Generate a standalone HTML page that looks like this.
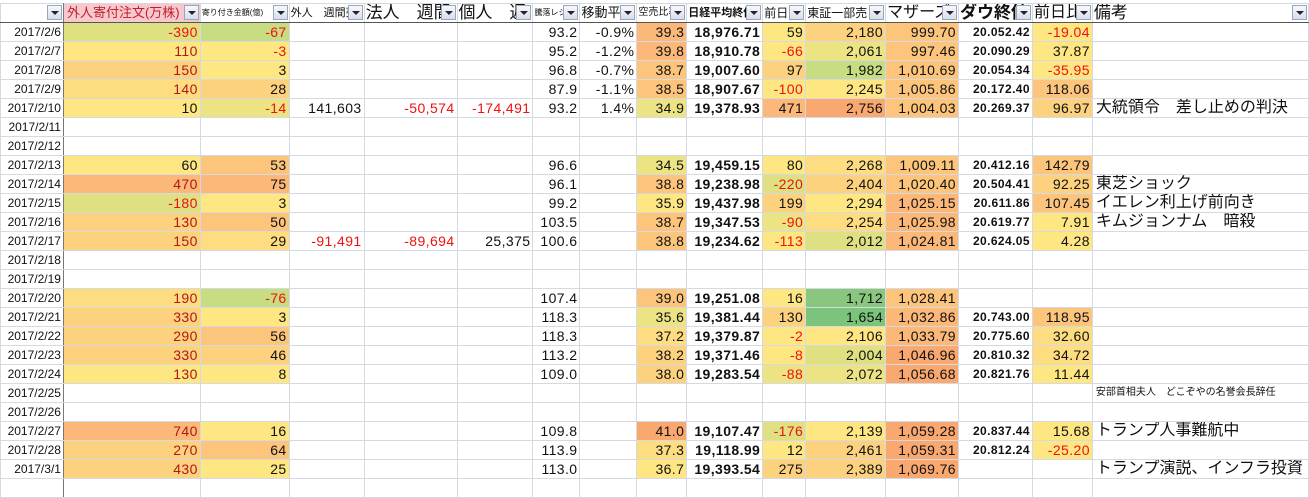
<!DOCTYPE html>
<html><head><meta charset="utf-8">
<style>
body{margin:0;background:#fff;width:1309px;height:484px;overflow:hidden;font-family:"Liberation Sans","Noto Sans CJK JP",sans-serif;}
table{position:absolute;left:0;top:3px;border-collapse:collapse;table-layout:fixed;font-size:14px;}
td{border:1px solid #d5d9e2;height:18px;padding:0 2px;text-align:right;white-space:nowrap;overflow:hidden;color:#111;line-height:18px;letter-spacing:0.4px;}
td.a{text-align:right;font-size:12px;border-right:1px solid #777;padding:0 2px 0 0;letter-spacing:0}
tr.h td{position:relative;text-align:left;font-size:15px;border-bottom:1px solid #555;padding:0 1px;letter-spacing:0}
.btn{position:absolute;right:1px;top:1px;width:15px;height:15px;border:1px solid #9aa6bc;background:linear-gradient(#f6f8fb,#d8dfeb);box-sizing:border-box;}
.btn:after{content:"";position:absolute;left:3px;top:5px;border-left:4px solid transparent;border-right:4px solid transparent;border-top:4px solid #223;}
.r{color:#f01010}.dr{color:#b01818}
.b{font-weight:bold}.n{font-weight:bold;font-size:12px}
.y{background:#fee683}.y2{background:#fedd81}.o1{background:#fdd27f}.o2{background:#fcc57b}.o3{background:#fbb879}.o4{background:#f9a870}
.g1{background:#ece483}.g2{background:#dee082}.g3{background:#c8dc81}.g4{background:#8ac77e}.g5{background:#7bc47c}
td.p{text-align:left;font-size:16px;padding-left:3px;letter-spacing:0}
</style></head><body>
<table>
<colgroup><col style="width:63px"><col style="width:137px"><col style="width:89px"><col style="width:75px"><col style="width:93px"><col style="width:76px"><col style="width:47px"><col style="width:57px"><col style="width:50px"><col style="width:76px"><col style="width:43px"><col style="width:80px"><col style="width:73px"><col style="width:74px"><col style="width:60px"><col style="width:216px"></colgroup>
<tr class="h">
<td class="a" style="border-bottom:1px solid #555"><span class="btn"></span></td>
<td style="background:#f8c8cf;color:#c0202a;font-size:13px;padding-left:3px">外人寄付注文(万株)<span class="btn"></span></td>
<td style="font-size:8px">寄り付き金額(億)<span class="btn"></span></td>
<td style="font-size:11px">外人　週間売<span class="btn"></span></td>
<td style="font-size:17px">法人　週間<span class="btn"></span></td>
<td style="font-size:17px">個人　週<span class="btn"></span></td>
<td style="font-size:8px">騰落レシオ<span class="btn"></span></td>
<td style="font-size:13px">移動平<span class="btn"></span></td>
<td style="font-size:10px">空売比率<span class="btn"></span></td>
<td style="font-size:11px;font-weight:bold">日経平均終値<span class="btn"></span></td>
<td style="font-size:12px">前日<span class="btn"></span></td>
<td style="font-size:12px">東証一部売<span class="btn"></span></td>
<td style="font-size:16px">マザーズ<span class="btn"></span></td>
<td style="font-size:17px;font-weight:bold">ダウ終値<span class="btn"></span></td>
<td style="font-size:16px">前日比<span class="btn"></span></td>
<td style="font-size:17px">備考<span class="btn"></span></td>
</tr>
<tr><td class="a">2017/2/6</td><td class="g2 r">-390</td><td class="g3 r">-67</td><td></td><td></td><td></td><td>93.2</td><td>-0.9%</td><td class="o3">39.3</td><td class="b">18,976.71</td><td class="y">59</td><td class="o1">2,180</td><td class="o2">999.70</td><td class="n">20.052.42</td><td class="y r">-19.04</td><td></td></tr>
<tr><td class="a">2017/2/7</td><td class="y dr">110</td><td class="y r">-3</td><td></td><td></td><td></td><td>95.2</td><td>-1.2%</td><td class="o3">39.8</td><td class="b">18,910.78</td><td class="y r">-66</td><td class="g1">2,061</td><td class="o2">997.46</td><td class="n">20.090.29</td><td class="y">37.87</td><td></td></tr>
<tr><td class="a">2017/2/8</td><td class="o1 dr">150</td><td class="y">3</td><td></td><td></td><td></td><td>96.8</td><td>-0.7%</td><td class="o2">38.7</td><td class="b">19,007.60</td><td class="o1">97</td><td class="g3">1,982</td><td class="o2">1,010.69</td><td class="n">20.054.34</td><td class="y r">-35.95</td><td></td></tr>
<tr><td class="a">2017/2/9</td><td class="y2 dr">140</td><td class="o1">28</td><td></td><td></td><td></td><td>87.9</td><td>-1.1%</td><td class="o2">38.5</td><td class="b">18,907.67</td><td class="y r">-100</td><td class="y">2,245</td><td class="o2">1,005.86</td><td class="n">20.172.40</td><td class="o2">118.06</td><td></td></tr>
<tr><td class="a">2017/2/10</td><td class="y">10</td><td class="g1 r">-14</td><td>141,603</td><td class="r">-50,574</td><td class="r">-174,491</td><td>93.2</td><td>1.4%</td><td class="g1">34.9</td><td class="b">19,378.93</td><td class="o3">471</td><td class="o4">2,756</td><td class="o2">1,004.03</td><td class="n">20.269.37</td><td class="o1">96.97</td><td class="p">大統領令　差し止めの判決</td></tr>
<tr><td class="a">2017/2/11</td><td></td><td></td><td></td><td></td><td></td><td></td><td></td><td></td><td></td><td></td><td></td><td></td><td></td><td></td><td></td></tr>
<tr><td class="a">2017/2/12</td><td></td><td></td><td></td><td></td><td></td><td></td><td></td><td></td><td></td><td></td><td></td><td></td><td></td><td></td><td></td></tr>
<tr><td class="a">2017/2/13</td><td class="y">60</td><td class="o2">53</td><td></td><td></td><td></td><td>96.6</td><td></td><td class="g1">34.5</td><td class="b">19,459.15</td><td class="y">80</td><td class="y2">2,268</td><td class="o2">1,009.11</td><td class="n">20.412.16</td><td class="o2">142.79</td><td></td></tr>
<tr><td class="a">2017/2/14</td><td class="o3 dr">470</td><td class="o3">75</td><td></td><td></td><td></td><td>96.1</td><td></td><td class="o2">38.8</td><td class="b">19,238.98</td><td class="g2 r">-220</td><td class="o1">2,404</td><td class="o2">1,020.40</td><td class="n">20.504.41</td><td class="o1">92.25</td><td class="p">東芝ショック</td></tr>
<tr><td class="a">2017/2/15</td><td class="g2 r">-180</td><td class="y">3</td><td></td><td></td><td></td><td>99.2</td><td></td><td class="y">35.9</td><td class="b">19,437.98</td><td class="o1">199</td><td class="y">2,294</td><td class="o3">1,025.15</td><td class="n">20.611.86</td><td class="o2">107.45</td><td class="p">イエレン利上げ前向き</td></tr>
<tr><td class="a">2017/2/16</td><td class="o1 dr">130</td><td class="o2">50</td><td></td><td></td><td></td><td>103.5</td><td></td><td class="o2">38.7</td><td class="b">19,347.53</td><td class="g1 r">-90</td><td class="y2">2,254</td><td class="o3">1,025.98</td><td class="n">20.619.77</td><td class="y">7.91</td><td class="p">キムジョンナム　暗殺</td></tr>
<tr><td class="a">2017/2/17</td><td class="o1 dr">150</td><td class="y2">29</td><td class="r">-91,491</td><td class="r">-89,694</td><td>25,375</td><td>100.6</td><td></td><td class="o2">38.8</td><td class="b">19,234.62</td><td class="y r">-113</td><td class="g2">2,012</td><td class="o3">1,024.81</td><td class="n">20.624.05</td><td class="y">4.28</td><td></td></tr>
<tr><td class="a">2017/2/18</td><td></td><td></td><td></td><td></td><td></td><td></td><td></td><td></td><td></td><td></td><td></td><td></td><td></td><td></td><td></td></tr>
<tr><td class="a">2017/2/19</td><td></td><td></td><td></td><td></td><td></td><td></td><td></td><td></td><td></td><td></td><td></td><td></td><td></td><td></td><td></td></tr>
<tr><td class="a">2017/2/20</td><td class="y2 dr">190</td><td class="g3 r">-76</td><td></td><td></td><td></td><td>107.4</td><td></td><td class="o2">39.0</td><td class="b">19,251.08</td><td class="y">16</td><td class="g4">1,712</td><td class="o2">1,028.41</td><td></td><td></td><td></td></tr>
<tr><td class="a">2017/2/21</td><td class="o1 dr">330</td><td class="y">3</td><td></td><td></td><td></td><td>118.3</td><td></td><td class="g1">35.6</td><td class="b">19,381.44</td><td class="o1">130</td><td class="g5">1,654</td><td class="o3">1,032.86</td><td class="n">20.743.00</td><td class="o2">118.95</td><td></td></tr>
<tr><td class="a">2017/2/22</td><td class="o1 dr">290</td><td class="o2">56</td><td></td><td></td><td></td><td>118.3</td><td></td><td class="y2">37.2</td><td class="b">19,379.87</td><td class="y r">-2</td><td class="y">2,106</td><td class="o3">1,033.79</td><td class="n">20.775.60</td><td class="y2">32.60</td><td></td></tr>
<tr><td class="a">2017/2/23</td><td class="o1 dr">330</td><td class="o1">46</td><td></td><td></td><td></td><td>113.2</td><td></td><td class="o1">38.2</td><td class="b">19,371.46</td><td class="y r">-8</td><td class="g2">2,004</td><td class="o4">1,046.96</td><td class="n">20.810.32</td><td class="y2">34.72</td><td></td></tr>
<tr><td class="a">2017/2/24</td><td class="y dr">130</td><td class="y">8</td><td></td><td></td><td></td><td>109.0</td><td></td><td class="o1">38.0</td><td class="b">19,283.54</td><td class="g1 r">-88</td><td class="g1">2,072</td><td class="o4">1,056.68</td><td class="n">20.821.76</td><td class="y">11.44</td><td></td></tr>
<tr><td class="a">2017/2/25</td><td></td><td></td><td></td><td></td><td></td><td></td><td></td><td></td><td></td><td></td><td></td><td></td><td></td><td></td><td class="p" style="font-size:10px">安部首相夫人　どこぞやの名誉会長辞任</td></tr>
<tr><td class="a">2017/2/26</td><td></td><td></td><td></td><td></td><td></td><td></td><td></td><td></td><td></td><td></td><td></td><td></td><td></td><td></td><td></td></tr>
<tr><td class="a">2017/2/27</td><td class="o3 dr">740</td><td class="y">16</td><td></td><td></td><td></td><td>109.8</td><td></td><td class="o4">41.0</td><td class="b">19,107.47</td><td class="g2 r">-176</td><td class="y">2,139</td><td class="o4">1,059.28</td><td class="n">20.837.44</td><td class="y">15.68</td><td class="p">トランプ人事難航中</td></tr>
<tr><td class="a">2017/2/28</td><td class="o1 dr">270</td><td class="o2">64</td><td></td><td></td><td></td><td>113.9</td><td></td><td class="y2">37.3</td><td class="b">19,118.99</td><td class="y">12</td><td class="o1">2,461</td><td class="o4">1,059.31</td><td class="n">20.812.24</td><td class="y r">-25.20</td><td></td></tr>
<tr><td class="a">2017/3/1</td><td class="o1 dr">430</td><td class="y">25</td><td></td><td></td><td></td><td>113.0</td><td></td><td class="y">36.7</td><td class="b">19,393.54</td><td class="o1">275</td><td class="o1">2,389</td><td class="o4">1,069.76</td><td></td><td></td><td class="p">トランプ演説、インフラ投資</td></tr>
<tr><td class="a"></td><td></td><td></td><td></td><td></td><td></td><td></td><td></td><td></td><td></td><td></td><td></td><td></td><td></td><td></td><td></td></tr>
</table>
</body></html>
